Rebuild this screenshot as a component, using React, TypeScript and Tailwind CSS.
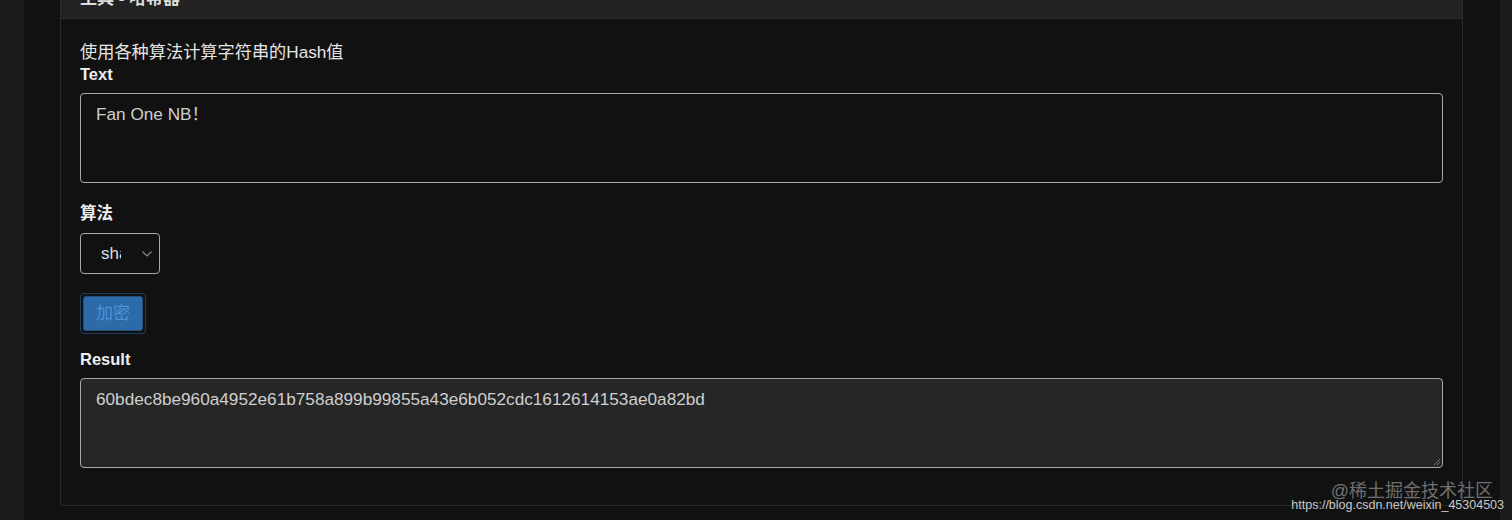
import React from "react";

export default function App() {
  return (
    <div
      className="relative w-[1512px] h-[520px] overflow-hidden bg-[#1c1c1c] flex"
      style={{ fontFamily: '"Liberation Sans", Arial, "Noto Sans CJK SC", sans-serif' }}
    >
      <div className="w-[24px] h-full bg-[#1c1c1c]" />
      <div className="flex-1 h-full bg-[#111111] pl-[36px] pr-[37px]">
        <div className="border border-[#2a2a2a] border-t-0 rounded-b-[4px] bg-[#111111] h-[506px] flex flex-col">
          <div className="h-[19px] bg-[#222222] border-b border-[#2c2c2c] relative overflow-hidden">
            <div className="absolute left-[19px] top-[-14px] text-[17px] font-bold text-[#dddddd] whitespace-nowrap">
              工具 - 哈希器
            </div>
          </div>
          <div className="px-[19px] pt-[22px] flex flex-col">
            <div className="text-[17.2px] leading-[22px] text-[#e5e5e5]">使用各种算法计算字符串的Hash值</div>
            <div className="text-[16.5px] leading-[22px] font-bold text-[#eeeeee]">Text</div>
            <div className="mt-[8px] h-[90px] rounded-[4px] border border-[#a8a8a8] bg-[#111111] px-[15px] pt-[9px] text-[17.2px] leading-[22px] text-[#cfcfcf]">
              Fan One NB！
            </div>
            <div className="mt-[19px] text-[16.5px] leading-[22px] font-bold text-[#eeeeee]">算法</div>
            <div className="mt-[9px] w-[80px] h-[41px] rounded-[4px] border border-[#a8a8a8] bg-[#111111] flex items-center pl-[20px] pr-[5px]">
              <span className="w-[20px] overflow-hidden whitespace-nowrap text-[17px] text-[#dddddd]">sha</span>
              <svg className="ml-auto mr-[1px]" width="12" height="8" viewBox="0 0 12 8">
                <path d="M1.5 1.5 L6 6 L10.5 1.5" fill="none" stroke="#8a8a8a" strokeWidth="1.2" />
              </svg>
            </div>
            <div className="mt-[19px] w-[66px] h-[41px] rounded-[4px] border border-[#1d3f63] p-[2px]">
              <div className="w-full h-full rounded-[3px] bg-[#2c6aa8] border border-[#244f7d] flex items-center justify-center text-[17px] text-[#4b93d6]">
                加密
              </div>
            </div>
            <div className="mt-[14px] text-[16.5px] leading-[22px] font-bold text-[#eeeeee]">Result</div>
            <div className="mt-[8px] h-[90px] rounded-[4px] border border-[#a8a8a8] bg-[#262626] px-[15px] pt-[9px] text-[17.2px] leading-[22px] text-[#cfcfcf] relative">
              60bdec8be960a4952e61b758a899b99855a43e6b052cdc1612614153ae0a82bd
              <svg className="absolute right-[1px] bottom-[1px]" width="9" height="9" viewBox="0 0 9 9">
                <path d="M8 2 L2 8 M8 5 L5 8" stroke="#777" strokeWidth="1" />
              </svg>
            </div>
          </div>
        </div>
      </div>
      <div className="w-[12px] h-full bg-[#1c1c1c]" />
      <div className="absolute right-[19px] top-[479px] text-[18px] leading-[24px] text-[#6f6f6f] whitespace-nowrap">
        @稀土掘金技术社区
      </div>
      <div className="absolute right-[8px] top-[497px] text-[12.5px] leading-[16px] text-[#c8c8c8] whitespace-nowrap">
        https://blog.csdn.net/weixin_45304503
      </div>
    </div>
  );
}
